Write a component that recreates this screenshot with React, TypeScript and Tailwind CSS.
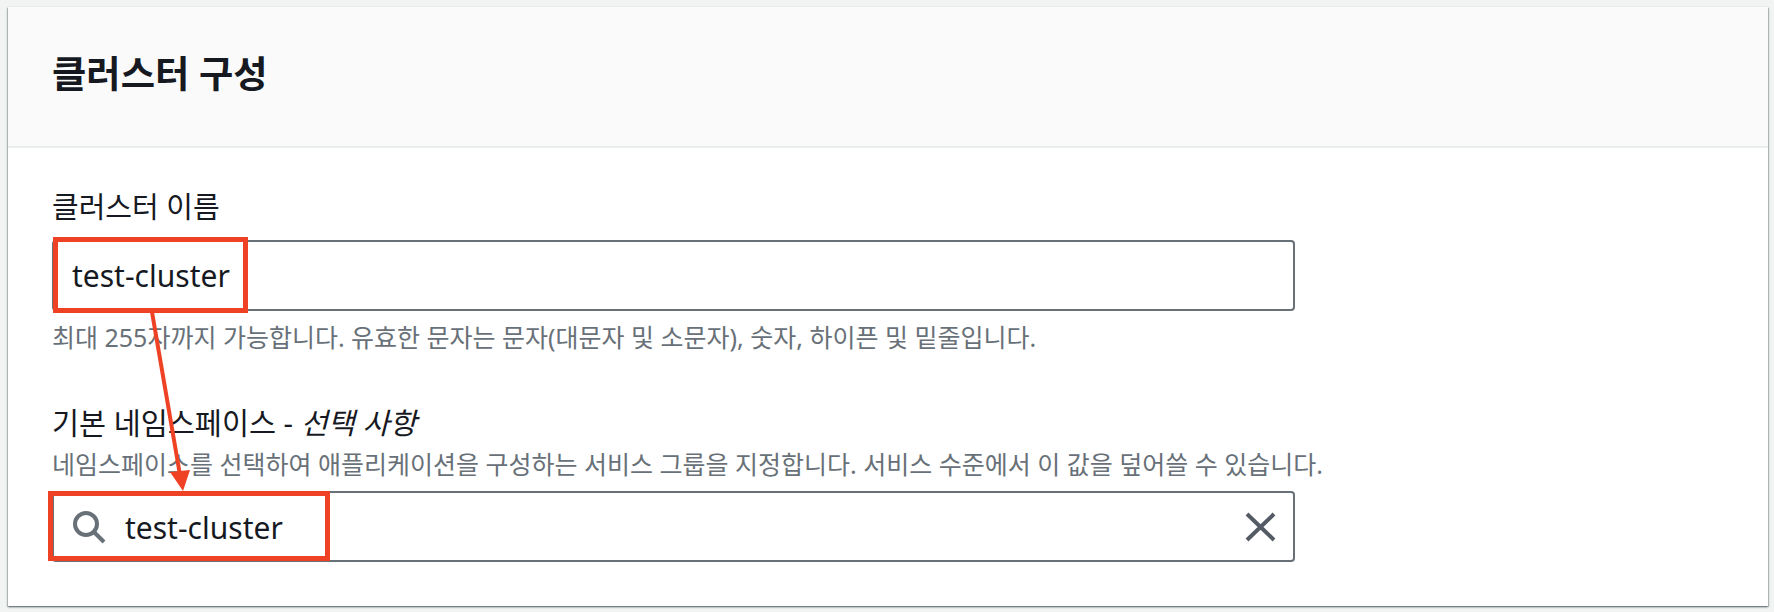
export default function App() {
  return (
    <div className="relative w-[1774px] h-[612px] overflow-hidden bg-[#f2f3f3] pt-[7px] pl-[8px] font-['Noto_Sans','Noto_Sans_CJK_KR',sans-serif] text-[#16191f]">
      <div className="w-[1760px] h-[599px] bg-white shadow-[0_1px_2px_rgba(0,28,36,0.5),1px_1px_1px_rgba(0,28,36,0.15),-1px_1px_1px_rgba(0,28,36,0.15)]">
        <div className="h-[141px] bg-[#fafafa] border-b-2 border-[#eaeded] pl-[44px] flex items-center">
          <h2 className="text-[37.3px] font-bold leading-[44px] mt-[-6px]">클러스터 구성</h2>
        </div>
        <div className="pl-[44px] pt-[39px] w-[1287px]">
          <div className="text-[29px] leading-[40px] h-[40px]">클러스터 이름</div>
          <div className="mt-[13px] h-[71px] border-2 border-[#687078] rounded-[4px] flex items-center pl-[18px] text-[30px] font-[450]">test-cluster</div>
          <div className="mt-[10px] text-[25px] leading-[32px] text-[#687078] whitespace-nowrap">최대 255자까지 가능합니다. 유효한 문자는 문자(대문자 및 소문자), 숫자, 하이픈 및 밑줄입니다.</div>
          <div className="mt-[50px] text-[29.4px] leading-[40px]">기본 네임스페이스 - <i>선택 사항</i></div>
          <div className="mt-[5px] text-[25px] leading-[32px] text-[#687078] whitespace-nowrap">네임스페이스를 선택하여 애플리케이션을 구성하는 서비스 그룹을 지정합니다. 서비스 수준에서 이 값을 덮어쓸 수 있습니다.</div>
          <div className="mt-[11px] h-[71px] border-2 border-[#687078] rounded-[4px] flex items-center pl-[18px] pr-[17px] text-[30px] font-[450]">
            <svg width="34" height="34" viewBox="0 0 34 34" fill="none" stroke="#687078" strokeWidth="4">
              <circle cx="14" cy="14" r="11" />
              <path d="M22 22 L32 32" />
            </svg>
            <span className="ml-[19px] flex-1 pt-[1px]">test-cluster</span>
            <svg width="31" height="30" viewBox="0 0 31 30" fill="none" stroke="#545b64" strokeWidth="4">
              <path d="M2 2 L29 28 M29 2 L2 28" />
            </svg>
          </div>
        </div>
      </div>
      <div className="absolute left-[53px] top-[237px] w-[195px] h-[76px] border-[5px] border-[#ef4123]" />
      <div className="absolute left-[48px] top-[491px] w-[282px] h-[70px] border-[5px] border-[#ef4123]" />
      <svg className="absolute left-0 top-0" width="1774" height="612" fill="none">
        <path d="M152 312 L180 475" stroke="#ef4123" strokeWidth="4" />
        <path d="M170 472 L190 470 L183 491 Z" fill="#ef4123" />
      </svg>
    </div>
  );
}
